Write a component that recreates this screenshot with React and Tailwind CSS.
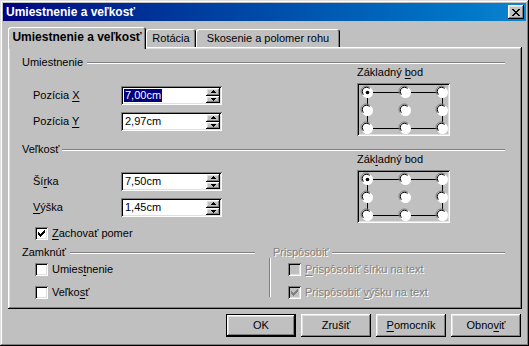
import React from "react";

const SUNKEN = "shadow-[inset_1px_1px_#808080,inset_-1px_-1px_#fff,inset_2px_2px_#000,inset_-2px_-2px_#dfdfdf]";
const RAISED = "shadow-[inset_-1px_-1px_#000,inset_1px_1px_#fff,inset_-2px_-2px_#808080,inset_2px_2px_#dfdfdf]";

const U = ({ children }) => (
  <span className="underline decoration-1 underline-offset-[2px]">{children}</span>
);

function Etched() {
  return <div className="flex-1 h-0 border-t border-t-[#808080] border-b border-b-white" />;
}

function Header({ children, disabled, gap = "ml-[4px]" }) {
  return (
    <div className="flex items-center h-[13px]">
      <span className={disabled ? "text-[#808080] [text-shadow:1px_1px_0_#fff]" : ""}>{children}</span>
      <div className={`flex-1 flex ${gap}`}>
        <Etched />
      </div>
    </div>
  );
}

function Arrow({ up }) {
  return (
    <svg width="5" height="3" viewBox="0 0 5 3" shapeRendering="crispEdges">
      {up ? (
        <>
          <rect x="2" y="0" width="1" height="1" fill="#000" />
          <rect x="1" y="1" width="3" height="1" fill="#000" />
          <rect x="0" y="2" width="5" height="1" fill="#000" />
        </>
      ) : (
        <>
          <rect x="0" y="0" width="5" height="1" fill="#000" />
          <rect x="1" y="1" width="3" height="1" fill="#000" />
          <rect x="2" y="2" width="1" height="1" fill="#000" />
        </>
      )}
    </svg>
  );
}

function Spin({ value, selected }) {
  return (
    <div className={`w-[101px] h-[19px] bg-white ${SUNKEN} p-[2px] flex`}>
      <div className="flex-1 flex items-center pl-[1px]">
        <span className={selected ? "bg-[#000080] text-white px-[1px]" : "px-[1px]"}>{value}</span>
      </div>
      <div className="w-[14px] flex flex-col">
        <div className={`flex-1 bg-[#c0c0c0] ${RAISED} flex items-center justify-center`}>
          <Arrow up />
        </div>
        <div className={`flex-1 bg-[#c0c0c0] ${RAISED} flex items-center justify-center`}>
          <Arrow />
        </div>
      </div>
    </div>
  );
}

function Field({ label, value, selected }) {
  return (
    <div className="flex items-center h-[19px]">
      <div className="w-[88px]">{label}</div>
      <Spin value={value} selected={selected} />
    </div>
  );
}

function Check({ checked, disabled, children }) {
  const c = disabled ? "#808080" : "#000";
  return (
    <div className="flex items-center h-[13px]">
      <div
        className={`w-[13px] h-[13px] shrink-0 ${SUNKEN} ${disabled ? "bg-[#c0c0c0]" : "bg-white"} flex items-center justify-center`}
      >
        {checked && (
          <svg width="7" height="7" viewBox="0 0 7 7" shapeRendering="crispEdges">
            <rect x="6" y="0" width="1" height="1" fill={c} />
            <rect x="5" y="1" width="2" height="1" fill={c} />
            <rect x="0" y="2" width="1" height="1" fill={c} />
            <rect x="4" y="2" width="3" height="1" fill={c} />
            <rect x="0" y="3" width="2" height="1" fill={c} />
            <rect x="3" y="3" width="3" height="1" fill={c} />
            <rect x="0" y="4" width="5" height="1" fill={c} />
            <rect x="1" y="5" width="3" height="1" fill={c} />
            <rect x="2" y="6" width="1" height="1" fill={c} />
          </svg>
        )}
      </div>
      <span className={`ml-[4px] ${disabled ? "text-[#808080] [text-shadow:1px_1px_0_#fff]" : ""}`}>
        {children}
      </span>
    </div>
  );
}

function BasePoint() {
  const xs = [10, 48, 85];
  const ys = [9, 27, 45];
  const pts = [];
  ys.forEach((y) => xs.forEach((x) => pts.push([x, y])));
  return (
    <div className={`w-[93px] h-[53px] ${SUNKEN}`}>
      <svg width="93" height="53" viewBox="0 0 93 53">
        <rect x="10.5" y="9.5" width="75" height="36" fill="none" stroke="#000" strokeWidth="1" />
        {pts.map(([x, y], i) => (
          <g key={i}>
            <circle cx={x + 0.5} cy={y + 0.5} r="5.5" fill="#fff" />
            <path
              d={`M ${x - 4.5} ${y + 3} A 5 5 0 0 1 ${x + 3} ${y - 4.5}`}
              fill="none"
              stroke="#808080"
              strokeWidth="1"
            />
            <path
              d={`M ${x - 3.5} ${y + 2.5} A 4 4 0 0 1 ${x + 2.5} ${y - 3.5}`}
              fill="none"
              stroke="#000"
              strokeWidth="1"
            />
            {i === 0 && <circle cx={x + 0.5} cy={y + 0.5} r="1.8" fill="#000" />}
          </g>
        ))}
      </svg>
    </div>
  );
}

function Button({ children, def }) {
  return (
    <div className={`w-[70px] h-[23px] ${def ? "border border-black" : ""} flex`}>
      <div className={`flex-1 ${RAISED} flex items-center justify-center`}>{children}</div>
    </div>
  );
}

const TAB = "shadow-[inset_1px_1px_#fff,inset_-1px_0_#000,inset_-2px_0_#808080] rounded-t-[3px]";

export default function App() {
  return (
    <div className="w-[529px] h-[346px] bg-[#c0c0c0] text-black text-[11px] leading-[13px] font-['Liberation_Sans',Arial,sans-serif] shadow-[inset_-1px_-1px_#000,inset_1px_1px_#dfdfdf,inset_-2px_-2px_#808080,inset_2px_2px_#fff] pt-[3px] overflow-hidden">
      {/* Title bar */}
      <div className="mx-[3px] h-[18px] bg-gradient-to-r from-[#000080] to-[#1084d0] flex items-center justify-between pl-[3px] pr-[2px]">
        <span className="text-white font-bold text-[12px]">Umiestnenie a veľkosť</span>
        <div className={`w-[16px] h-[14px] bg-[#c0c0c0] ${RAISED} flex items-center justify-center`}>
          <svg width="8" height="7" viewBox="0 0 8 7" shapeRendering="crispEdges">
            <path d="M0 0h2v1h1v1h2V1h1V0h2v1H7v1H6v1H5v1h1v1h1v1h1v1H6V6H5V5H3v1H2v1H0V6h1V5h1V4h1V3H2V2H1V1H0z" fill="#000" />
          </svg>
        </div>
      </div>

      {/* Tabs */}
      <div className="ml-[8px] mt-[6px] h-[20px] flex items-end relative z-10">
        <div className={`w-[138px] h-[22px] -mb-[2px] bg-[#c0c0c0] ${TAB} flex items-center justify-center font-bold text-[12px] pb-[1px]`}>
          Umiestnenie a veľkosť
        </div>
        <div className={`w-[50px] h-[18px] ${TAB} flex items-center justify-center pt-[1px]`}>Rotácia</div>
        <div className={`w-[144px] h-[18px] ${TAB} flex items-center justify-center pt-[1px]`}>
          Skosenie a polomer rohu
        </div>
      </div>

      {/* Panel */}
      <div className={`ml-[8px] w-[514px] h-[262px] ${RAISED} pl-[14px] pr-[17px] pt-[9px] flex flex-col`}>
        <Header>Umiestnenie</Header>
        <div className="flex">
          <div className="w-[335px] pl-[11px] pt-[17px] flex flex-col gap-[7px]">
            <Field label={<>Pozícia <U>X</U></>} value="7,00cm" selected />
            <Field label={<>Pozícia <U>Y</U></>} value="2,97cm" />
          </div>
          <div className="-mt-[3px] flex flex-col">
            <div className="h-[13px]">Základný <U>b</U>od</div>
            <div className="mt-[4px]">
              <BasePoint />
            </div>
          </div>
        </div>

        <div className="mt-[7px]">
          <Header gap="ml-[3px]">Veľkosť</Header>
        </div>
        <div className="flex">
          <div className="w-[335px] pl-[11px] pt-[16px] flex flex-col">
            <Field label={<>Ší<U>r</U>ka</>} value="7,50cm" />
            <div className="mt-[7px]">
              <Field label={<><U>V</U>ýška</>} value="1,45cm" />
            </div>
            <div className="mt-[10px] ml-[2px]">
              <Check checked>
                <U>Z</U>achovať pomer
              </Check>
            </div>
          </div>
          <div className="-mt-[3px] flex flex-col">
            <div className="h-[13px]">Zák<U>l</U>adný bod</div>
            <div className="mt-[4px]">
              <BasePoint />
            </div>
          </div>
        </div>

        <div className="mt-[6px] flex">
          <div className="w-[233px] flex flex-col">
            <Header>Zamknúť</Header>
            <div className="pl-[13px] pt-[4px] flex flex-col gap-[10px]">
              <Check>
                Umies<U>t</U>nenie
              </Check>
              <Check>
                Veľko<U>s</U>ť
              </Check>
            </div>
          </div>
          <div className="ml-[14px] flex-1 flex flex-col">
            <div className="pl-[4px]">
              <Header disabled>Prispôsobiť</Header>
            </div>
            <div className="flex">
              <div className="w-0 h-[39px] -mt-[1px] border-l border-l-[#808080] border-r border-r-white" />
              <div className="ml-[17px] pt-[4px] flex flex-col gap-[10px]">
                <Check disabled>
                  <U>P</U>rispôsobiť šírku na text
                </Check>
                <Check disabled checked>
                  Prispôsobiť <U>v</U>ýšku na text
                </Check>
              </div>
            </div>
          </div>
        </div>
      </div>

      {/* Buttons */}
      <div className="ml-[8px] w-[514px] mt-[5px] pr-[1px] flex justify-end gap-[5px]">
        <Button def>OK</Button>
        <Button>Zrušiť</Button>
        <Button>
          <U>P</U>omocník
        </Button>
        <Button>
          Obno<U>v</U>iť
        </Button>
      </div>
    </div>
  );
}
